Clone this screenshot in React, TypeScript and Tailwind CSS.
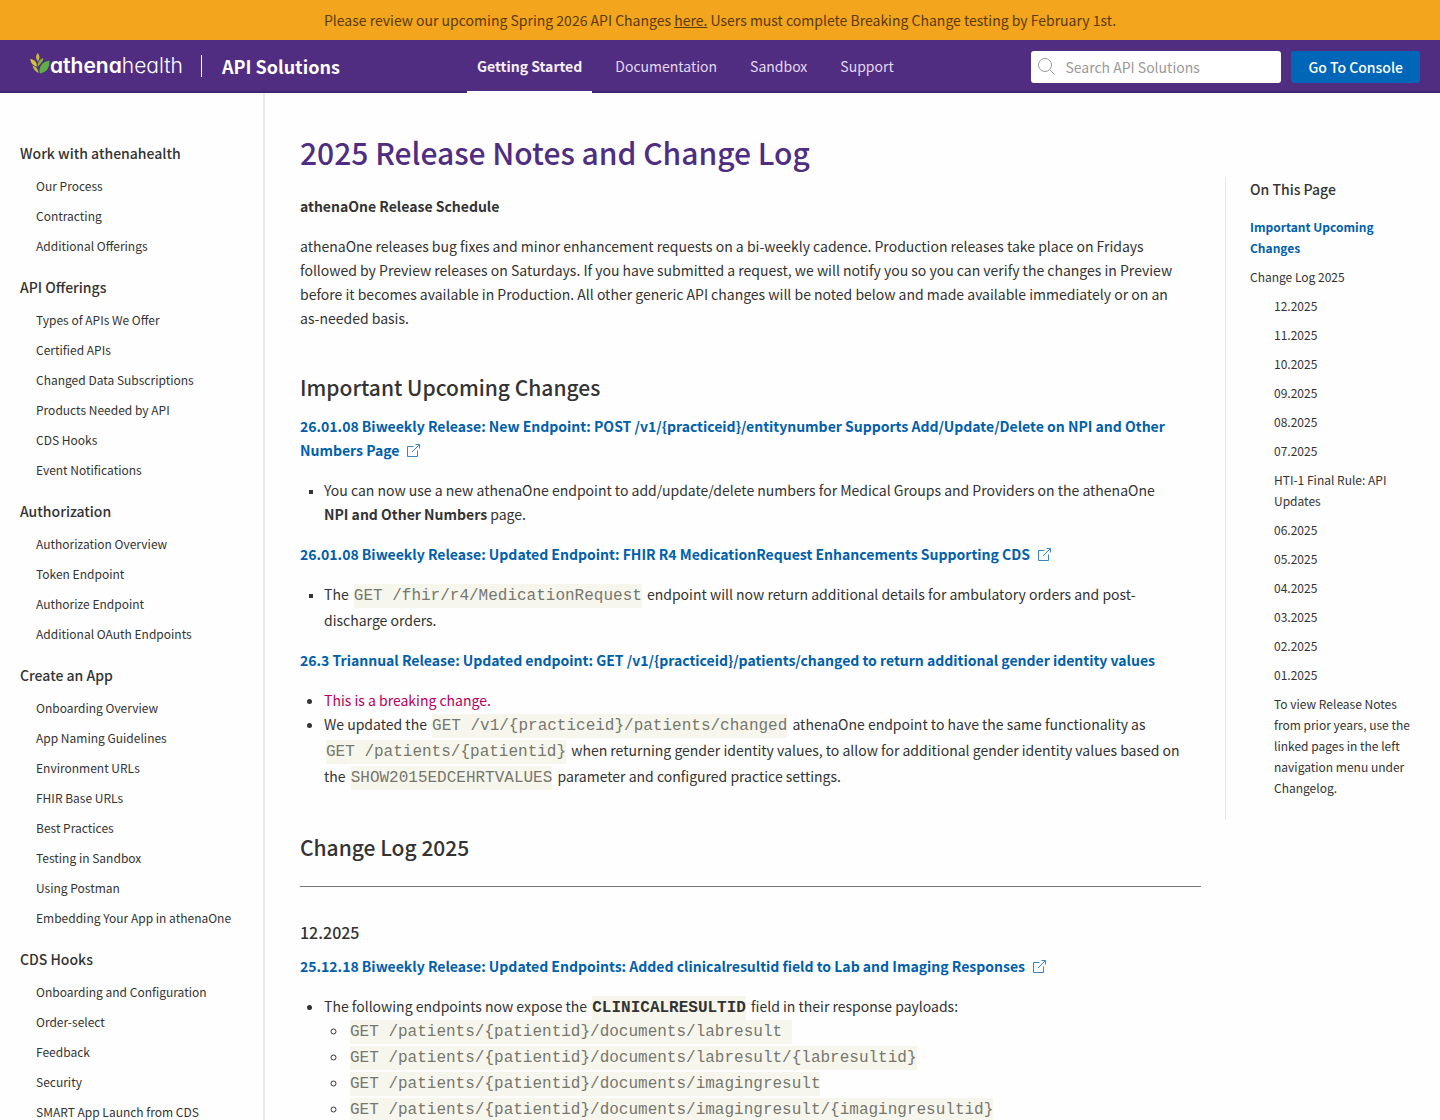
import type { ReactNode } from 'react';

const sidebarGroups = [
  { title: 'Work with athenahealth', items: ['Our Process', 'Contracting', 'Additional Offerings'] },
  {
    title: 'API Offerings',
    items: ['Types of APIs We Offer', 'Certified APIs', 'Changed Data Subscriptions', 'Products Needed by API', 'CDS Hooks', 'Event Notifications'],
  },
  { title: 'Authorization', items: ['Authorization Overview', 'Token Endpoint', 'Authorize Endpoint', 'Additional OAuth Endpoints'] },
  {
    title: 'Create an App',
    items: ['Onboarding Overview', 'App Naming Guidelines', 'Environment URLs', 'FHIR Base URLs', 'Best Practices', 'Testing in Sandbox', 'Using Postman', 'Embedding Your App in athenaOne'],
  },
  { title: 'CDS Hooks', items: ['Onboarding and Configuration', 'Order-select', 'Feedback', 'Security', 'SMART App Launch from CDS'] },
];

const monthLinks = [
  '12.2025', '11.2025', '10.2025', '09.2025', '08.2025', '07.2025',
  'HTI-1 Final Rule: API Updates',
  '06.2025', '05.2025', '04.2025', '03.2025', '02.2025', '01.2025',
  'To view Release Notes from prior years, use the linked pages in the left navigation menu under Changelog.',
];

function Leaf() {
  return (
    <svg className="mb-1" width="20" height="21" viewBox="0 0 20 21" aria-hidden="true">
      <path d="M7.700 0C10 2.500 10.200 5.500 7.800 8.500C5.500 5.500 5.400 2.500 7.700 0Z" fill="#c9b53c" />
      <path d="M0.200 6C4.300 6.500 6.700 8.500 7 13.500C3.500 12.800 0.800 10.500 0.200 6Z" fill="#d3c535" />
      <path d="M7.800 14C7.300 10 8.800 6.500 13.200 5C13.400 7.500 12 9 10.300 11C9.300 12 8.500 12.800 7.800 14Z" fill="#8dab3f" />
      <path d="M19.300 7.500C19.700 14 17.500 19 9.800 20.500C8.500 14 11.500 9 19.300 7.500Z" fill="#5fae46" />
      <path d="M2.500 12.500C5.500 13.500 7.800 15 8.600 20C5.500 18.500 3.500 16.500 2.500 12.500Z" fill="#b4c23a" />
    </svg>
  );
}

function ExternalIcon() {
  return (
    <svg className="ml-2 inline-block align-[-1px]" width="13" height="13" viewBox="0 0 13 13" fill="none" stroke="#3b84c2" aria-hidden="true">
      <path d="M6.500 2.500H0.500V12.500H10.500V6.500" />
      <path d="M5 8L12 1M8.500 0.500H12.500V4.500" />
    </svg>
  );
}

function Code({ children, bold = false }: { children: ReactNode; bold?: boolean }) {
  return (
    <code
      className={
        bold
          ? 'mx-[2px] bg-[#f6f6ed] py-[3px] font-["Liberation_Mono",monospace] text-[16px] font-bold whitespace-nowrap text-[#333333]'
          : 'mx-[2px] bg-[#f6f6ed] py-[3px] font-["Liberation_Mono",monospace] text-[16px] whitespace-nowrap text-[#77776e]'
      }
    >
      {children}
    </code>
  );
}

function ReleaseLink({ children, external = false }: { children: ReactNode; external?: boolean }) {
  return (
    <p className="mb-4 pr-4 font-bold">
      <a href="#release" className="text-[#0060ac]">
        {children}
        {external && <ExternalIcon />}
      </a>
    </p>
  );
}

export default function App() {
  return (
    <div className='h-screen overflow-hidden bg-[#fefefe] font-["Noto_Sans_CJK_SC",sans-serif] text-[14px] leading-6 text-[#333333]'>
      <div className="flex h-10 items-center justify-center bg-[#f2a51d] text-[#5b3a05]">
        <p>
          Please review our upcoming Spring 2026 API Changes{' '}
          <a href="#changes" className="underline">here.</a> Users must complete Breaking Change testing by February 1st.
        </p>
      </div>

      <header className="flex h-[53px] items-stretch border-b-2 border-[#3f2375] bg-[#512d82] pr-5 pl-[30px] text-white">
        <div className="flex w-[437px] items-center">
          <a href="#home" className="flex items-center" aria-label="athenahealth">
            <Leaf />
            <span className='font-[Inter,sans-serif] text-[21px] font-semibold [font-feature-settings:"cv11"]'>
              athena<span className="font-light">health</span>
            </span>
          </a>
          <span className="ml-[18px] h-[22px] w-px bg-white" />
          <a href="#api" className="ml-5 text-[18px] font-bold">API Solutions</a>
        </div>
        <nav className="flex gap-[13px] text-[#e3d9f0]">
          <a href="#start" className="-mb-[2px] flex items-center border-b-2 border-white px-[10px] font-bold text-[#f6f0fc]">Getting Started</a>
          <a href="#docs" className="flex items-center px-[10px]">Documentation</a>
          <a href="#sandbox" className="flex items-center px-[10px]">Sandbox</a>
          <a href="#support" className="flex items-center px-[10px]">Support</a>
        </nav>
        <div className="ml-auto flex items-center gap-[10px] pt-[2px]">
          <label className="flex h-8 w-[250px] items-center rounded-[3px] bg-white pl-[7px]">
            <svg className="shrink-0" width="17" height="17" viewBox="0 0 17 17" fill="none" stroke="#999999" aria-hidden="true">
              <circle cx="7" cy="7" r="6.500" />
              <path d="M11.500 11.500L16.500 16.500" />
            </svg>
            <input type="text" aria-label="Search API Solutions" placeholder="Search API Solutions" className="ml-[10px] w-full min-w-0 bg-transparent text-[#333333] outline-none placeholder:text-[#999999]" />
          </label>
          <button type="button" className="h-8 rounded-[3px] bg-[#0066b8] px-[17px] font-medium">Go To Console</button>
        </div>
      </header>

      <div className="flex items-start">
        <aside className="w-[265px] shrink-0 border-r-2 border-[#e9e9e9] pt-[34px] pl-5">
          {sidebarGroups.map((group) => (
            <section key={group.title}>
              <h2 className="pt-[14px] pb-[6px] font-medium">{group.title}</h2>
              <ul>
                {group.items.map((item) => (
                  <li key={item} className="pl-4 text-[12px] leading-[30px]">
                    <a href="#page">{item}</a>
                  </li>
                ))}
              </ul>
            </section>
          ))}
        </aside>

        <main className="min-w-0 flex-1 pt-[39px] pr-6 pl-[35px]">
          <h1 className="text-[30px] leading-[40px] font-medium text-[#4e2d82]">2025 Release Notes and Change Log</h1>
          <p className="mt-[22px] font-bold">athenaOne Release Schedule</p>
          <p className="mt-4 pr-4">
            athenaOne releases bug fixes and minor enhancement requests on a bi-weekly cadence. Production releases take place on Fridays followed by Preview releases on Saturdays. If you have submitted a request, we will notify you so you can verify the changes in Preview before it becomes available in Production. All other generic API changes will be noted below and made available immediately or on an <span className="whitespace-nowrap">as-needed</span> basis.
          </p>

          <h2 className="mt-10 mb-[10px] text-[21px] leading-[34px] font-medium">Important Upcoming Changes</h2>
          <ReleaseLink external>
            26.01.08 Biweekly Release: New Endpoint: POST /v1/{'{practiceid}'}/entitynumber Supports Add/Update/Delete on NPI and Other Numbers Page
          </ReleaseLink>
          <ul className="mb-4 list-[square] pr-4 pl-6 marker:text-[11px]">
            <li>
              You can now use a new athenaOne endpoint to add/update/delete numbers for Medical Groups and Providers on the athenaOne <strong className="whitespace-nowrap">NPI and Other Numbers</strong> page.
            </li>
          </ul>
          <ReleaseLink external>26.01.08 Biweekly Release: Updated Endpoint: FHIR R4 MedicationRequest Enhancements Supporting CDS</ReleaseLink>
          <ul className="mb-4 list-[square] pr-4 pl-6 marker:text-[11px]">
            <li>
              The <Code>GET /fhir/r4/MedicationRequest</Code> endpoint will now return additional details for ambulatory orders and post-discharge orders.
            </li>
          </ul>
          <ReleaseLink>26.3 Triannual Release: Updated endpoint: GET /v1/{'{practiceid}'}/patients/changed to return additional gender identity values</ReleaseLink>
          <ul className="list-disc pr-4 pl-6">
            <li><span className="text-[#b8005c]">This is a breaking change.</span></li>
            <li>
              We updated the <Code>GET /v1/{'{practiceid}'}/patients/changed</Code> athenaOne endpoint to have the same functionality as <Code>GET /patients/{'{patientid}'}</Code> when returning gender identity values, to allow for additional gender identity values based on the <Code>SHOW2015EDCEHRTVALUES</Code> parameter and configured practice settings.
            </li>
          </ul>

          <h2 className="mt-10 text-[21px] leading-[34px] font-medium">Change Log 2025</h2>
          <hr className="mt-[22px] border-[#777777]" />
          <h3 className="mt-[33px] mb-[10px] text-[16px] font-medium">12.2025</h3>
          <ReleaseLink external>25.12.18 Biweekly Release: Updated Endpoints: Added clinicalresultid field to Lab and Imaging Responses</ReleaseLink>
          <ul className="list-disc pl-6">
            <li>
              The following endpoints now expose the <Code bold>CLINICALRESULTID</Code> field in their response payloads:
              <ul className="-mt-[2px] list-[circle] pl-6">
                <li><Code>GET /patients/{'{patientid}'}/documents/labresult&nbsp;</Code></li>
                <li><Code>GET /patients/{'{patientid}'}/documents/labresult/{'{labresultid}'}</Code></li>
                <li><Code>GET /patients/{'{patientid}'}/documents/imagingresult</Code></li>
                <li><Code>GET /patients/{'{patientid}'}/documents/imagingresult/{'{imagingresultid}'}</Code></li>
              </ul>
            </li>
          </ul>
        </main>

        <aside className="mt-[84px] w-[215px] shrink-0 border-l border-[#e6e6e6] pr-5 pb-[22px] pl-6">
          <h2 className="mb-[15px] font-medium">On This Page</h2>
          <ul className="flex flex-col gap-2 text-[12px] leading-[21px]">
            <li><a href="#important" className="font-bold text-[#0060ac]">Important Upcoming Changes</a></li>
            <li><a href="#log">Change Log 2025</a></li>
            {monthLinks.map((label) => (
              <li key={label} className="pl-6"><a href="#section">{label}</a></li>
            ))}
          </ul>
        </aside>
      </div>
    </div>
  );
}
